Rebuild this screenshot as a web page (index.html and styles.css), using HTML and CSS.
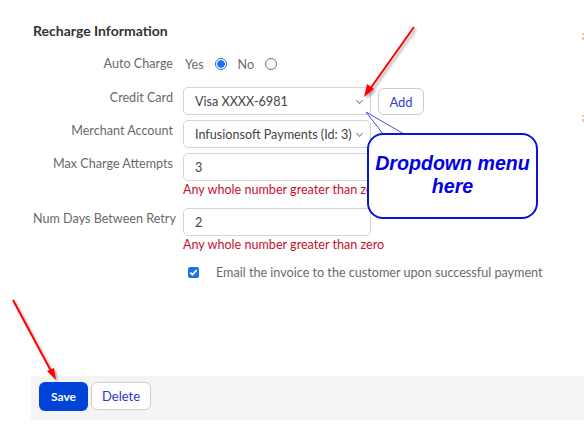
FILE: index.html
```html
<!DOCTYPE html>
<html>
<head>
<meta charset="utf-8">
<link rel="stylesheet" href="styles.css">
</head>
<body>
<div class="page">
  <h2 class="title">Recharge Information</h2>
  <div class="form">
    <div class="row r-auto">
      <div class="label">Auto Charge</div>
      <div class="ctl radios">
        <span class="yes">Yes</span><span class="radio on"></span>
        <span class="no">No</span><span class="radio"></span>
      </div>
    </div>
    <div class="row r-card">
      <div class="label">Credit Card</div>
      <div class="ctl inline">
        <div class="select">Visa XXXX-6981<span class="chev"></span></div>
        <button class="btn-add">Add</button>
      </div>
    </div>
    <div class="row r-merch">
      <div class="label">Merchant Account</div>
      <div class="ctl">
        <div class="select">Infusionsoft Payments (Id: 3)<span class="chev"></span></div>
      </div>
    </div>
    <div class="row r-max">
      <div class="label">Max Charge Attempts</div>
      <div class="ctl">
        <div class="input">3</div>
        <div class="err">Any whole number greater than zero</div>
      </div>
    </div>
    <div class="row r-days">
      <div class="label">Num Days Between Retry</div>
      <div class="ctl">
        <div class="input">2</div>
        <div class="err">Any whole number greater than zero</div>
      </div>
    </div>
    <div class="row r-check">
      <div class="label"></div>
      <div class="ctl check">
        <span class="cbox"><svg width="11" height="11" viewBox="0 0 11 11"><path d="M2.3 5.6 L4.4 7.7 L8.7 3.2" fill="none" stroke="#fff" stroke-width="1.8"/></svg></span>
        <span>Email the invoice to the customer upon successful payment</span>
      </div>
    </div>
  </div>
  <div class="footer">
    <button class="btn-save">Save</button>
    <button class="btn-del">Delete</button>
  </div>

  <div class="edge e1"></div>
  <div class="edge e2"></div>

  <svg class="overlay" width="584" height="440" viewBox="0 0 584 440">
    <defs>
      <filter id="sh" x="-20%" y="-20%" width="140%" height="140%">
        <feDropShadow dx="2" dy="2" stdDeviation="1" flood-color="#000" flood-opacity="0.3"/>
      </filter>
    </defs>
    <g filter="url(#sh)">
      <line x1="414" y1="27" x2="370" y2="89" stroke="#f00" stroke-width="2"/>
      <polygon points="364,97 367,84 374,89" fill="#f00"/>
      <line x1="13" y1="300" x2="51" y2="371" stroke="#f00" stroke-width="2"/>
      <polygon points="56,380 47,371 54,368" fill="#f00"/>
    </g>
    <path d="M383 134 L366 112 L404 134" fill="#fff" stroke="#4a4af0" stroke-width="1"/>
  </svg>
  <div class="bubble">Dropdown menu<br>here</div>
</div>
</body>
</html>
```
FILE: styles.css
```css
* { box-sizing: border-box; }
body {
  margin: 0;
  background: #fff;
  font-family: Lato, "Liberation Sans", Arial, sans-serif;
  font-size: 12.6px;
  color: #666;
}
.page {
  position: relative;
  width: 584px;
  height: 440px;
  overflow: hidden;
}
.title {
  margin: 0;
  padding: 22px 0 0 33px;
  font-size: 14px;
  line-height: 18px;
  font-weight: bold;
  color: #333;
}
.form {
  padding-left: 33px;
}
.row {
  display: grid;
  grid-template-columns: 140px 1fr;
  column-gap: 10px;
}
.label {
  text-align: right;
  line-height: 18px;
  padding-top: 2px;
  color: #6a6a6a;
  white-space: nowrap;
}
.r-auto { margin-top: 15px; }
.r-auto .label { padding-top: 0; }
.r-card { margin-top: 14px; }
.r-merch { margin-top: 5px; }
.r-max { margin-top: 5px; }
.r-days { margin-top: 10px; }
.r-check { margin-top: 11px; }

.radios {
  display: flex;
  align-items: center;
  height: 18px;
  color: #6a6a6a;
}
.radios .yes { margin-left: 2px; }
.radios .no { margin-left: 11px; }
.radio {
  display: inline-block;
  width: 12px;
  height: 12px;
  border-radius: 50%;
  border: 1px solid #777;
  margin-left: 11px;
  background: #fff;
}
.radio.on {
  border: 1px solid #1a73e8;
  background: radial-gradient(circle, #1a73e8 0 3.5px, #fff 4px);
}
.inline {
  display: flex;
  gap: 7px;
  align-items: flex-start;
}
.select, .input {
  position: relative;
  width: 188px;
  height: 28px;
  border: 1px solid #d5d5d5;
  border-radius: 5px;
  padding: 0 0 0 11px;
  line-height: 27px;
  color: #444;
  white-space: nowrap;
  background: #fff;
}
.chev {
  position: absolute;
  right: 8px;
  top: 10px;
  width: 5px;
  height: 5px;
  border-right: 1.3px solid #888;
  border-bottom: 1.3px solid #888;
  transform: rotate(45deg);
}
.btn-add {
  height: 27px;
  width: 46px;
  margin-top: 1px;
  border: 1px solid #ccc;
  border-radius: 6px;
  background: #fff;
  color: #2f3fd0;
  font-family: inherit;
  font-size: 13px;
  padding: 0;
}
.err {
  color: #c8102e;
  line-height: 16px;
  margin-top: 1px;
  white-space: nowrap;
}
.check {
  display: flex;
  align-items: center;
  height: 16px;
  color: #6a6a6a;
}
.cbox {
  display: inline-flex;
  width: 11px;
  height: 11px;
  margin-left: 5px;
  margin-right: 17px;
  background: #1a73e8;
  border-radius: 2px;
}
.footer {
  position: absolute;
  left: 31px;
  top: 376px;
  right: 0;
  height: 44px;
  background: #f4f4f4;
  display: flex;
  gap: 3px;
  padding: 6px 0 0 8px;
  align-items: flex-start;
}
.btn-save {
  width: 49px;
  height: 29px;
  border: 0;
  border-radius: 6px;
  background: #0043d8;
  color: #fff;
  font-weight: bold;
  font-family: inherit;
  font-size: 12px;
  padding: 0;
}
.btn-del {
  width: 60px;
  height: 28px;
  border: 1px solid #ccc;
  border-radius: 6px;
  background: #fff;
  color: #3333cc;
  font-family: inherit;
  font-size: 13px;
  padding: 0;
}
.edge {
  position: absolute;
  left: 582px;
  width: 2px;
  height: 7px;
  background: linear-gradient(#f2c9a0 0 2px, #fff 2px 4px, #f2c9a0 4px);
}
.e1 { top: 33px; }
.e2 { top: 115px; }
.overlay {
  position: absolute;
  left: 0;
  top: 0;
  pointer-events: none;
}
.bubble {
  position: absolute;
  left: 367px;
  top: 133px;
  width: 171px;
  height: 86px;
  border: 2px solid #0a14e0;
  border-radius: 16px;
  background: #fff;
  color: #0000e6;
  font-family: "Liberation Sans", Arial, sans-serif;
  font-style: italic;
  font-weight: bold;
  font-size: 19.6px;
  line-height: 23px;
  text-align: center;
  padding-top: 17px;
}
```
